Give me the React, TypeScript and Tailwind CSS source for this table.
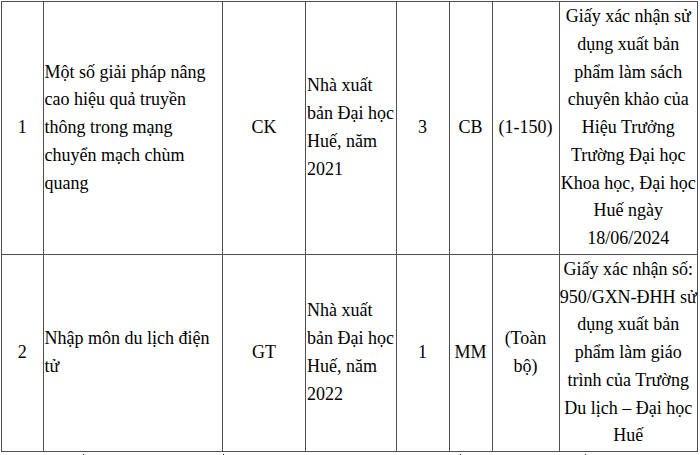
import React from "react";

const Lines = ({ lines }: { lines: string[] }) => (
  <>
    {lines.map((l, i) => (
      <div key={i} className="whitespace-nowrap">
        {l}
      </div>
    ))}
  </>
);

const cell = "border border-[#505050] align-middle p-0";

export default function App() {
  return (
    <div
      className="w-[700px] h-[455px] bg-white overflow-hidden text-black text-[18px] leading-[27.8px]"
      style={{ fontFamily: '"Liberation Serif", "Times New Roman", serif' }}
    >
      <table className="ml-[1px] mt-[1px] border-collapse table-fixed w-[697px]">
        <colgroup>
          <col className="w-[41.5px]" />
          <col className="w-[179.5px]" />
          <col className="w-[83px]" />
          <col className="w-[90.5px]" />
          <col className="w-[53px]" />
          <col className="w-[43px]" />
          <col className="w-[67px]" />
          <col className="w-[138.5px]" />
        </colgroup>
        <tbody>
          <tr className="h-[253px]">
            <td className={`${cell} text-center`}>1</td>
            <td className={`${cell} pl-[1px]`}>
              <Lines
                lines={[
                  "Một số giải pháp nâng",
                  "cao hiệu quả truyền",
                  "thông trong mạng",
                  "chuyển mạch chùm",
                  "quang",
                ]}
              />
            </td>
            <td className={`${cell} text-center`}>CK</td>
            <td className={`${cell} pl-[1px]`}>
              <Lines lines={["Nhà xuất", "bản Đại học", "Huế, năm", "2021"]} />
            </td>
            <td className={`${cell} text-center`}>3</td>
            <td className={`${cell} text-center`}>CB</td>
            <td className={`${cell} text-center`}>(1-150)</td>
            <td className={`${cell} text-center`}>
              <Lines
                lines={[
                  "Giấy xác nhận sử",
                  "dụng xuất bản",
                  "phẩm làm sách",
                  "chuyên khảo của",
                  "Hiệu Trưởng",
                  "Trường Đại học",
                  "Khoa học, Đại học",
                  "Huế ngày",
                  "18/06/2024",
                ]}
              />
            </td>
          </tr>
          <tr className="h-[197px]">
            <td className={`${cell} text-center`}>2</td>
            <td className={`${cell} pl-[1px]`}>
              <Lines lines={["Nhập môn du lịch điện", "tử"]} />
            </td>
            <td className={`${cell} text-center`}>GT</td>
            <td className={`${cell} pl-[1px]`}>
              <Lines lines={["Nhà xuất", "bản Đại học", "Huế, năm", "2022"]} />
            </td>
            <td className={`${cell} text-center`}>1</td>
            <td className={`${cell} text-center`}>MM</td>
            <td className={`${cell} text-center`}>
              <Lines lines={["(Toàn", "bộ)"]} />
            </td>
            <td className={`${cell} text-center`}>
              <Lines
                lines={[
                  "Giấy xác nhận số:",
                  "950/GXN-ĐHH sử",
                  "dụng xuất bản",
                  "phẩm làm giáo",
                  "trình của Trường",
                  "Du lịch – Đại học",
                  "Huế",
                ]}
              />
            </td>
          </tr>
        </tbody>
      </table>
      <div className="flex h-[3px] mt-[1px]">
        <span className="ml-[83px] w-[1px] h-[2px] mt-[1px] bg-[#222222]" />
        <span className="ml-[139px] w-[1px] h-[2px] mt-[1px] bg-[#222222]" />
        <span className="ml-[236px] w-[1px] h-[2px] mt-[1px] bg-[#222222]" />
        <span className="ml-[124px] w-[1px] h-[2px] mt-[1px] bg-[#222222]" />
      </div>
    </div>
  );
}
